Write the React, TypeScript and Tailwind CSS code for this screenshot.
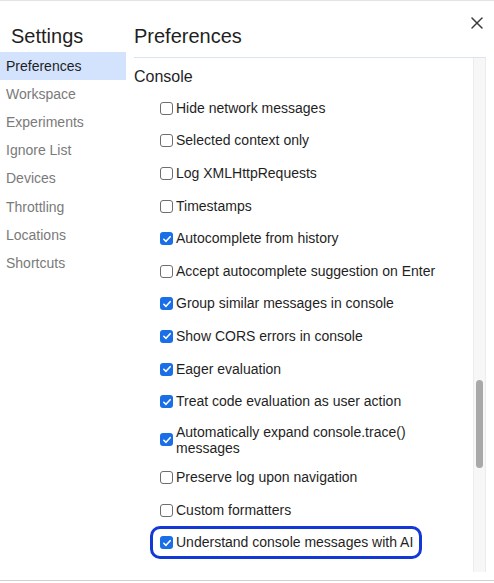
import { X } from 'lucide-react';

type Option = {
  label: string;
  checked: boolean;
  twoLine?: boolean;
  focused?: boolean;
};

const navItems = [
  'Preferences',
  'Workspace',
  'Experiments',
  'Ignore List',
  'Devices',
  'Throttling',
  'Locations',
  'Shortcuts',
];

const options: Option[] = [
  { label: 'Hide network messages', checked: false },
  { label: 'Selected context only', checked: false },
  { label: 'Log XMLHttpRequests', checked: false },
  { label: 'Timestamps', checked: false },
  { label: 'Autocomplete from history', checked: true },
  { label: 'Accept autocomplete suggestion on Enter', checked: false },
  { label: 'Group similar messages in console', checked: true },
  { label: 'Show CORS errors in console', checked: true },
  { label: 'Eager evaluation', checked: true },
  { label: 'Treat code evaluation as user action', checked: true },
  { label: 'Automatically expand console.trace() messages', checked: true, twoLine: true },
  { label: 'Preserve log upon navigation', checked: false },
  { label: 'Custom formatters', checked: false },
  { label: 'Understand console messages with AI', checked: true, focused: true },
];

function Checkbox({ checked }: { checked: boolean }) {
  if (checked) {
    return (
      <span className="flex h-[13px] w-[13px] shrink-0 items-center justify-center rounded-[3px] bg-[#1a6fe6]">
        <svg viewBox="0 0 12 12" className="h-[10px] w-[10px]" fill="none">
          <path d="M2.2 6.3 4.8 8.8 9.8 3.2" stroke="white" strokeWidth="1.9" strokeLinecap="round" strokeLinejoin="round" />
        </svg>
      </span>
    );
  }
  return <span className="h-[13px] w-[13px] shrink-0 rounded-[3px] border border-[#6e6e6e] bg-white" />;
}

function OptionRow({ option }: { option: Option }) {
  if (option.focused) {
    return (
      <div className="flex h-[32.6px] items-center">
        <div className="ml-[16px] flex h-[33px] items-center gap-[3px] rounded-[10px] border-[3px] border-[#1438d6] pl-[7px] pr-[6px]">
          <Checkbox checked={option.checked} />
          <span className="whitespace-nowrap">{option.label}</span>
        </div>
      </div>
    );
  }

  return (
    <div className={`flex items-center gap-[3px] pl-[26px] ${option.twoLine ? 'h-[43.4px]' : 'h-[32.6px]'}`}>
      <Checkbox checked={option.checked} />
      <span className={option.twoLine ? 'w-[230px] leading-[16px]' : 'whitespace-nowrap'}>{option.label}</span>
    </div>
  );
}

export default function App() {
  return (
    <div className="h-[583px] w-[494px] overflow-hidden bg-white font-['Liberation_Sans',Arial,sans-serif] text-[#1f1f1f]">
      <div className="flex h-[581px] border-t border-b border-t-[#e3e3e3] border-b-[#cfcfcf]">
        <aside className="w-[126px] shrink-0">
          <h1 className="pl-[11px] pt-[21px] text-[20px] leading-[28px]">Settings</h1>
          <nav className="mt-[2px]">
            {navItems.map((item, i) => (
              <div
                key={item}
                className={`flex h-[28.2px] items-center pl-[6px] text-[14px] ${
                  i === 0 ? 'bg-[#d3e3fd] text-[#1f1f1f]' : 'text-[#7a7a7a]'
                }`}
              >
                {item}
              </div>
            ))}
          </nav>
        </aside>

        <main className="flex min-w-0 flex-1 flex-col pl-[8px] pr-[8px]">
          <div className="flex h-[57px] shrink-0 items-start justify-between border-b border-[#d9e3f4]">
            <h2 className="pt-[21px] text-[20px] leading-[28px]">Preferences</h2>
            <X className="mr-[-1px] mt-[12px] h-[20px] w-[20px] text-[#3a3a3a]" strokeWidth={1.8} />
          </div>

          <div className="flex h-[514px] text-[14px]">
            <div className="min-w-0 flex-1">
              <h3 className="mt-[9px] text-[16px] leading-[20px]">Console</h3>
              <div className="mt-[5px]">
                {options.map((option) => (
                  <OptionRow key={option.label} option={option} />
                ))}
              </div>
            </div>
            <div className="w-[13px] shrink-0 border-l border-r border-[#ececec] bg-[#f7f7f7] px-[2px] pt-[322px]">
              <div className="h-[88px] rounded-full bg-[#a9a9a9]" />
            </div>
          </div>
        </main>
      </div>
    </div>
  );
}
